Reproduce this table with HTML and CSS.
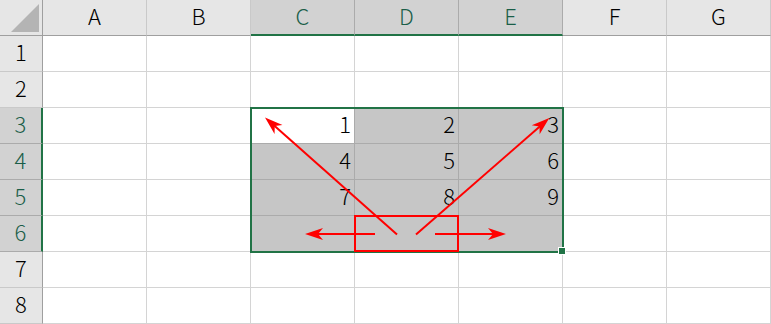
FILE: index.html
```html
<!DOCTYPE html>
<html lang="ja">
<head>
<meta charset="utf-8">
<title>Sheet</title>
<link rel="stylesheet" href="styles.css">
</head>
<body>
<div class="sheet">
  <div class="grid">
    <div class="hd corner"><svg width="28" height="28" viewBox="0 0 28 28"><polygon points="0,28 28,28 28,0" fill="#b4b4b4"/></svg></div>
    <div class="hd col">A</div>
    <div class="hd col">B</div>
    <div class="hd col hsel">C</div>
    <div class="hd col hsel">D</div>
    <div class="hd col hsel">E</div>
    <div class="hd col">F</div>
    <div class="hd col">G</div>

    <div class="hd row">1</div>
    <div class="c"></div><div class="c"></div><div class="c"></div><div class="c"></div><div class="c"></div><div class="c"></div><div class="c"></div>

    <div class="hd row">2</div>
    <div class="c"></div><div class="c"></div><div class="c"></div><div class="c"></div><div class="c"></div><div class="c"></div><div class="c"></div>

    <div class="hd row rsel">3</div>
    <div class="c"></div><div class="c"></div>
    <div class="c sel act">1</div><div class="c sel">2</div><div class="c sel">3</div>
    <div class="c"></div><div class="c"></div>

    <div class="hd row rsel">4</div>
    <div class="c"></div><div class="c"></div>
    <div class="c sel">4</div><div class="c sel">5</div><div class="c sel">6</div>
    <div class="c"></div><div class="c"></div>

    <div class="hd row rsel">5</div>
    <div class="c"></div><div class="c"></div>
    <div class="c sel">7</div><div class="c sel">8</div><div class="c sel">9</div>
    <div class="c"></div><div class="c"></div>

    <div class="hd row rsel">6</div>
    <div class="c"></div><div class="c"></div>
    <div class="c sel"></div><div class="c sel"></div><div class="c sel"></div>
    <div class="c"></div><div class="c"></div>

    <div class="hd row">7</div>
    <div class="c"></div><div class="c"></div><div class="c"></div><div class="c"></div><div class="c"></div><div class="c"></div><div class="c"></div>

    <div class="hd row">8</div>
    <div class="c"></div><div class="c"></div><div class="c"></div><div class="c"></div><div class="c"></div><div class="c"></div><div class="c"></div>
  </div>

  <div class="selection"></div>
  <div class="handle"></div>

  <svg class="marks" width="771" height="324" viewBox="0 0 771 324">
    <rect x="355" y="216" width="103" height="35" fill="none" stroke="#ff0000" stroke-width="2"/>
    <g stroke="#ff0000" stroke-width="2" fill="none">
      <line x1="397" y1="234.5" x2="273" y2="124.6"/>
      <line x1="416" y1="234.5" x2="541.5" y2="125"/>
      <line x1="375" y1="234" x2="316" y2="234"/>
      <line x1="435" y1="234" x2="495" y2="234"/>
    </g>
    <g fill="#ff0000">
      <polygon transform="translate(265 117.5) rotate(221.4)" points="0,0 -18,-6 -13,0 -18,6"/>
      <polygon transform="translate(549.3 118) rotate(-41)" points="0,0 -18,-6 -13,0 -18,6"/>
      <polygon transform="translate(305 234) rotate(180)" points="0,0 -18,-6 -13,0 -18,6"/>
      <polygon transform="translate(506 234)" points="0,0 -18,-6 -13,0 -18,6"/>
    </g>
  </svg>
</div>
</body>
</html>
```
FILE: styles.css
```css
html, body {
  margin: 0;
  padding: 0;
  background: #ffffff;
}

.sheet {
  position: relative;
  width: 771px;
  height: 324px;
  overflow: hidden;
  font-family: "Noto Sans CJK JP", "Noto Sans", sans-serif;
  font-size: 22px;
  font-weight: 300;
  color: #000000;
}

.grid {
  display: grid;
  grid-template-columns: 43px repeat(7, 104px);
  grid-auto-rows: 36px;
}

.grid > div {
  box-sizing: border-box;
  border-right: 1px solid #d4d4d4;
  border-bottom: 1px solid #d4d4d4;
  line-height: 22px;
  padding-top: 4px;
}

.hd {
  background: #e6e6e6;
  display: flex;
  justify-content: center;
  color: #000000;
}

.hd.col {
  border-right-color: #c9c9c9;
  border-bottom-color: #9f9f9f;
}

.hd.row {
  border-right-color: #9f9f9f;
  border-bottom-color: #c9c9c9;
}

.grid > .corner {
  justify-content: flex-end;
  align-items: flex-end;
  padding: 0 3px 3px 0;
  border-right-color: #9f9f9f;
  border-bottom-color: #9f9f9f;
}

.corner svg {
  display: block;
}

.grid > .hsel {
  background: #d2d2d2;
  color: #1a5e48;
  border-right-color: #ababab;
  border-bottom: 2px solid #217346;
}

.grid > .rsel {
  background: #d2d2d2;
  color: #1a5e48;
  border-bottom-color: #ababab;
  border-right: 2px solid #217346;
}

.c {
  display: flex;
  justify-content: flex-end;
  padding-right: 3px;
}

.grid > .sel {
  background: #c6c6c6;
  border-right-color: #ababab;
  border-bottom-color: #ababab;
}

.grid > .act {
  background: #ffffff;
}

.selection {
  position: absolute;
  left: 250px;
  top: 107px;
  width: 314px;
  height: 146px;
  box-sizing: border-box;
  border: 2px solid #217346;
}

.handle {
  position: absolute;
  left: 558px;
  top: 247px;
  width: 6px;
  height: 6px;
  background: #217346;
  border: 1px solid #ffffff;
}

.marks {
  position: absolute;
  left: 0;
  top: 0;
  pointer-events: none;
}
```
